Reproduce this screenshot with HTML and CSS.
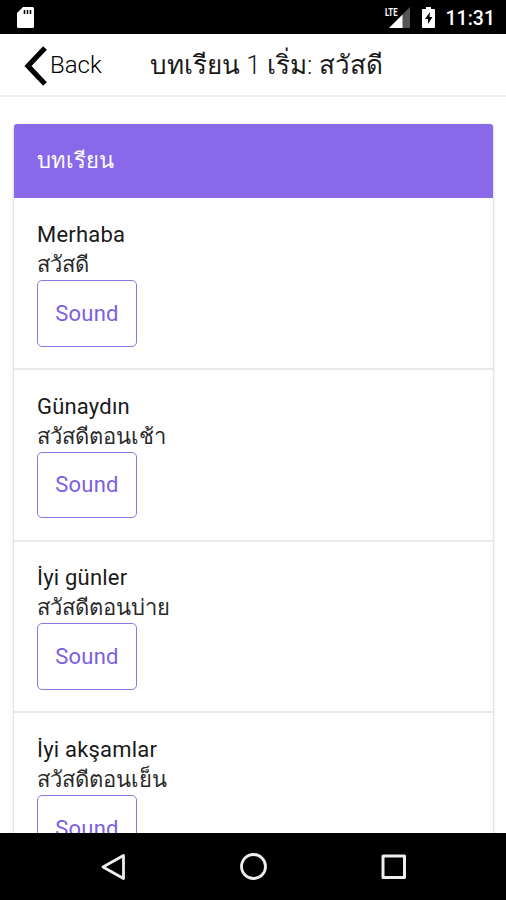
FILE: index.html
```html
<!DOCTYPE html>
<html lang="th">
<head>
    <meta charset="UTF-8">
    <meta name="viewport" content="width=device-width, initial-scale=1.0">
    <title>บทเรียน 1</title>
    <link rel="stylesheet" href="styles.css">
</head>
<body>
    <div class="status-bar">
        <svg class="sd-icon" width="17" height="21" viewBox="0 0 17 21">
            <path d="M6 0h9.500a1.500 1.500 0 0 1 1.500 1.500v18a1.500 1.500 0 0 1-1.500 1.500h-14a1.500 1.500 0 0 1-1.500-1.500V6z" fill="#fff"/>
            <path d="M7.500 3v4M10.500 3v4M13.500 3v4" stroke="#000" stroke-width="1.500"/>
        </svg>
        <div class="status-right">
            <svg class="signal-icon" width="25" height="21" viewBox="0 0 25 21">
                <path d="M17 8L25 0v21h-8z" fill="#555"/>
                <path d="M4 21L17.500 7.500V21z" fill="#fff"/>
                <text class="lte" x="0" y="9" textLength="12.500" lengthAdjust="spacingAndGlyphs">LTE</text>
            </svg>
            <svg class="battery-icon" width="13" height="21" viewBox="0 0 13 21">
                <path d="M4 0h5v2h3q1 0 1 1v17q0 1-1 1H1q-1 0-1-1V3q0-1 1-1h3z" fill="#fff"/>
                <path d="M8 5L3 12h3v5l4.500-7h-3z" fill="#000"/>
            </svg>
            <span class="time">11:31</span>
        </div>
    </div>

    <header class="navbar">
        <a class="back" href="#">
            <svg width="23" height="40" viewBox="0 0 23 40">
                <path d="M21 2L4 20l17 18" fill="none" stroke="#000" stroke-width="5.200"/>
            </svg>
            <span>Back</span>
        </a>
        <h1>บทเรียน 1 เริ่ม: สวัสดี</h1>
    </header>

    <main class="content">
        <div class="card">
            <h2 class="card-header">บทเรียน</h2>
            <div class="lesson">
                <p>Merhaba</p>
                <p class="thai">สวัสดี</p>
                <button>Sound</button>
            </div>
            <div class="lesson">
                <p>Günaydın</p>
                <p class="thai">สวัสดีตอนเช้า</p>
                <button>Sound</button>
            </div>
            <div class="lesson">
                <p>İyi günler</p>
                <p class="thai">สวัสดีตอนบ่าย</p>
                <button>Sound</button>
            </div>
            <div class="lesson">
                <p>İyi akşamlar</p>
                <p class="thai">สวัสดีตอนเย็น</p>
                <button>Sound</button>
            </div>
        </div>
    </main>

    <nav class="system-nav">
        <svg width="26" height="28" viewBox="0 0 26 28">
            <path d="M23.500 2.500v23L3 14z" fill="none" stroke="#eee" stroke-width="2.800" stroke-linejoin="round"/>
        </svg>
        <svg width="28" height="28" viewBox="0 0 28 28">
            <circle cx="13.500" cy="13.500" r="12" fill="none" stroke="#eee" stroke-width="2.800"/>
        </svg>
        <svg width="26" height="28" viewBox="0 0 26 28">
            <rect x="2" y="3" width="21.500" height="21.500" fill="none" stroke="#eee" stroke-width="3" stroke-linejoin="round"/>
        </svg>
    </nav>
</body>
</html>
```
FILE: styles.css
```css
* {
    margin: 0;
    padding: 0;
    box-sizing: border-box;
}

body {
    display: flex;
    flex-direction: column;
    height: 900px;
    overflow: hidden;
    font-family: Roboto, "Noto Sans", sans-serif;
    font-size: 22px;
    color: #1a1a1a;
    background: #fff;
}

.status-bar {
    display: flex;
    flex: none;
    justify-content: space-between;
    align-items: center;
    height: 34px;
    padding: 0 11px 0 17px;
    background: #000;
    color: #fff;
}

.status-right {
    display: flex;
    align-items: center;
}

.signal-icon {
    overflow: visible;
}

.lte {
    fill: #fff;
    font-size: 11.5px;
    font-weight: 700;
}

.battery-icon {
    margin: 0 11px 0 12px;
}

.time {
    font-size: 19.5px;
    font-weight: 500;
    position: relative;
    top: 1px;
}

.navbar {
    display: flex;
    flex: none;
    align-items: center;
    height: 63px;
    padding-left: 24px;
    border-bottom: 2px solid #f1f1f1;
}

.back {
    display: flex;
    align-items: center;
    width: 126px;
    gap: 3px;
    color: #000;
    text-decoration: none;
    font-size: 24px;
    font-weight: 300;
}

.back svg {
    margin-top: 3px;
}

h1 {
    font-size: 26px;
    font-weight: 300;
    white-space: nowrap;
}

.content {
    flex: 1;
    min-height: 0;
    overflow: hidden;
    padding: 27px 13px 0 14px;
}

.card {
    border-radius: 4px;
    box-shadow: 0 1px 3px rgba(0, 0, 0, 0.3);
}

.card-header {
    height: 73.5px;
    margin-bottom: 1px;
    padding-left: 23px;
    border-radius: 3px 3px 0 0;
    background: #8969e9;
    color: #fff;
    font-size: 22px;
    font-weight: 400;
    line-height: 73px;
}

.lesson {
    height: 171.6px;
    padding: 21.5px 23px 0;
    border-bottom: 2px solid #e9e9e9;
}

.lesson p {
    height: 30px;
    line-height: 30px;
    letter-spacing: 0.2px;
}

.lesson .thai {
    color: #2a2a2a;
    letter-spacing: 0.05px;
}

.lesson button {
    display: block;
    width: 100px;
    height: 66.5px;
    border: 1.5px solid #8f76e4;
    border-radius: 5px;
    background: #fff;
    color: #7b5fe0;
    font: 400 22px Roboto, sans-serif;
    letter-spacing: 0.2px;
}

.system-nav {
    display: flex;
    flex: none;
    justify-content: space-between;
    align-items: center;
    height: 67px;
    padding: 0 99px 0 100px;
    background: #000;
}
```
